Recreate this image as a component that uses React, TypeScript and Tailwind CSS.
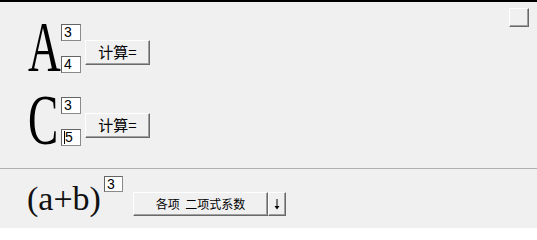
import React from "react";

const btn =
  "flex items-center justify-center bg-[#f0f0f0] border border-t-white border-l-white border-r-[#696969] border-b-[#696969] shadow-[inset_-1px_-1px_0_#a0a0a0]";
const box =
  "bg-white border border-t-[#646464] border-l-[#646464] border-r-[#8a8a8a] border-b-[#8a8a8a] text-[14px] leading-[15px] pl-[2px] text-black";

function NumBox({ v, caret = false, cls = "w-[20px] h-[17px]" }: { v: string; caret?: boolean; cls?: string }) {
  return (
    <div className={`${box} ${cls} flex items-start`} style={{ fontFamily: '"Liberation Sans", Arial, sans-serif' }}>
      {caret && <span className="w-[1px] h-[13px] bg-black mt-[1px]" />}
      <span>{v}</span>
    </div>
  );
}

function Row({ letter, mt }: { letter: string; mt: string }) {
  return (
    <div className={`flex items-start ${mt}`}>
      <div className="w-[33px] h-[48px] overflow-visible">
        <span
          className="inline-block text-[72px] leading-[48px] origin-left scale-x-[0.63] text-black"
          style={{ fontFamily: '"Liberation Serif", "Times New Roman", serif' }}
        >
          {letter}
        </span>
      </div>
      <div className="flex flex-col gap-[15px] mt-[1px]">
        <NumBox v="3" />
        <NumBox v={letter === "A" ? "4" : "5"} caret={letter === "C"} />
      </div>
      <div
        className={`${btn} ml-[4px] mt-[17px] w-[65px] h-[25px] text-[15px] text-black`}
        style={{ fontFamily: '"Noto Sans CJK SC", sans-serif' }}
      >
        计算=
      </div>
    </div>
  );
}

export default function App() {
  return (
    <div className="w-[537px] h-[228px] bg-[#f0f0f0] border-t-2 border-black flex flex-col overflow-hidden">
      <div className="h-[167px] flex border-b border-[#b0b0b0]">
        <div className="flex flex-col pt-[21px] pl-[28px]">
          <Row letter="A" mt="mt-0" />
          <Row letter="C" mt="mt-[23px]" />
        </div>
        <div className={`${btn} ml-auto mt-[6px] mr-[8px] w-[20px] h-[19px]`} />
      </div>
      <div className="flex items-start pl-[27px]">
        <div
          className="w-[77px] mt-[13px] text-[34px] leading-[34px] text-[#111] whitespace-nowrap"
          style={{ fontFamily: '"Liberation Serif", "Times New Roman", serif' }}
        >
          (a+b)
        </div>
        <NumBox v="3" cls="w-[19px] h-[16px] mt-[7px]" />
        <div className="flex ml-[10px] mt-[23px]">
          <div
            className={`${btn} w-[135px] h-[24px] text-[12px] text-black`}
            style={{ fontFamily: '"Noto Sans CJK SC", sans-serif' }}
          >
            各项&nbsp;&nbsp;二项式系数
          </div>
          <div className={`${btn} w-[18px] h-[24px]`}>
            <svg width="8" height="12" viewBox="0 0 8 12">
              <line x1="4" y1="1" x2="4" y2="10" stroke="black" strokeWidth="1" />
              <path d="M1.5 8 L4 11.5 L6.5 8 Z" fill="black" />
            </svg>
          </div>
        </div>
      </div>
    </div>
  );
}
